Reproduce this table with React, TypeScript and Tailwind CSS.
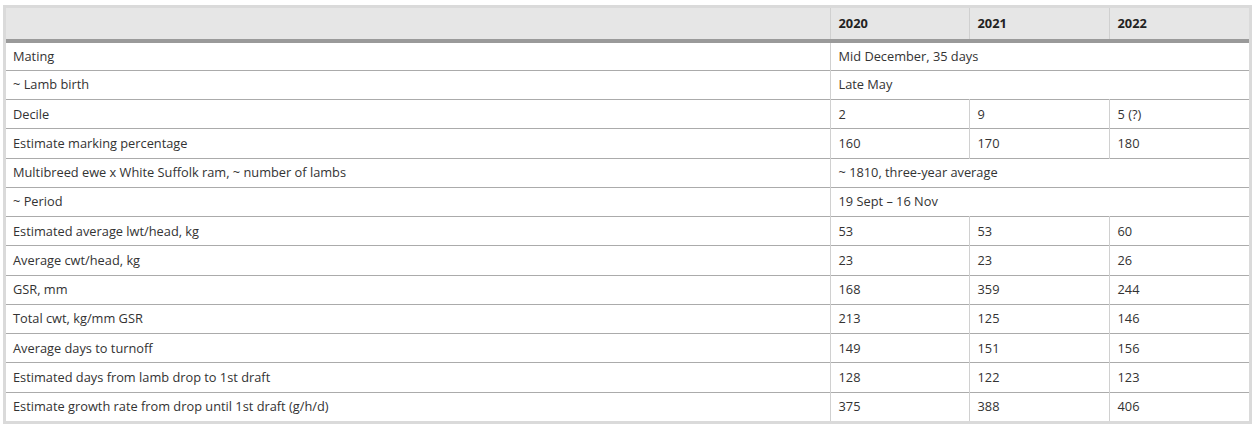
import React from "react";

const rows: (string | [string] | string[])[][] = [
  ["Mating", ["Mid December, 35 days"]],
  ["~ Lamb birth", ["Late May"]],
  ["Decile", ["2", "9", "5 (?)"]],
  ["Estimate marking percentage", ["160", "170", "180"]],
  ["Multibreed ewe x White Suffolk ram, ~ number of lambs", ["~ 1810, three-year average"]],
  ["~ Period", ["19 Sept – 16 Nov"]],
  ["Estimated average lwt/head, kg", ["53", "53", "60"]],
  ["Average cwt/head, kg", ["23", "23", "26"]],
  ["GSR, mm", ["168", "359", "244"]],
  ["Total cwt, kg/mm GSR", ["213", "125", "146"]],
  ["Average days to turnoff", ["149", "151", "156"]],
  ["Estimated days from lamb drop to 1st draft", ["128", "122", "123"]],
  ["Estimate growth rate from drop until 1st draft (g/h/d)", ["375", "388", "406"]],
];

export default function App() {
  return (
    <div className="bg-white w-[1258px] h-[426px] pt-[5px] pl-[3px]" style={{ fontFamily: '"Open Sans", "Noto Sans", sans-serif' }}>
      <div className="w-[1249px] border-[3px] border-[#dadada]">
        <table className="w-full border-collapse table-fixed text-[12.8px] text-[#333]">
          <colgroup>
            <col className="w-[824px]" />
            <col className="w-[139px]" />
            <col className="w-[140px]" />
            <col className="w-[140px]" />
          </colgroup>
          <thead>
            <tr className="bg-[#e6e6e6] h-[33px] border-b-4 border-[#9a9a9a]">
              <th className="border-r border-[#d0d0d0]"></th>
              <th className="text-left font-bold text-[#222] pl-2 border-r border-[#d0d0d0]">2020</th>
              <th className="text-left font-bold text-[#222] pl-2 border-r border-[#d0d0d0]">2021</th>
              <th className="text-left font-bold text-[#222] pl-2">2022</th>
            </tr>
          </thead>
          <tbody>
            {rows.map((r, i) => {
              const vals = r[1] as string[];
              const last = i === rows.length - 1;
              return (
                <tr key={i} className={`h-[29.25px] ${last ? "" : "border-b border-[#ababab]"}`}>
                  <td className="pl-[7px] border-r border-[#d0d0d0] align-middle">{r[0] as string}</td>
                  {vals.length === 1 ? (
                    <td colSpan={3} className="pl-2">{vals[0]}</td>
                  ) : (
                    <>
                      <td className="pl-2 border-r border-[#d0d0d0]">{vals[0]}</td>
                      <td className="pl-2 border-r border-[#d0d0d0]">{vals[1]}</td>
                      <td className="pl-2">{vals[2]}</td>
                    </>
                  )}
                </tr>
              );
            })}
          </tbody>
        </table>
      </div>
    </div>
  );
}
